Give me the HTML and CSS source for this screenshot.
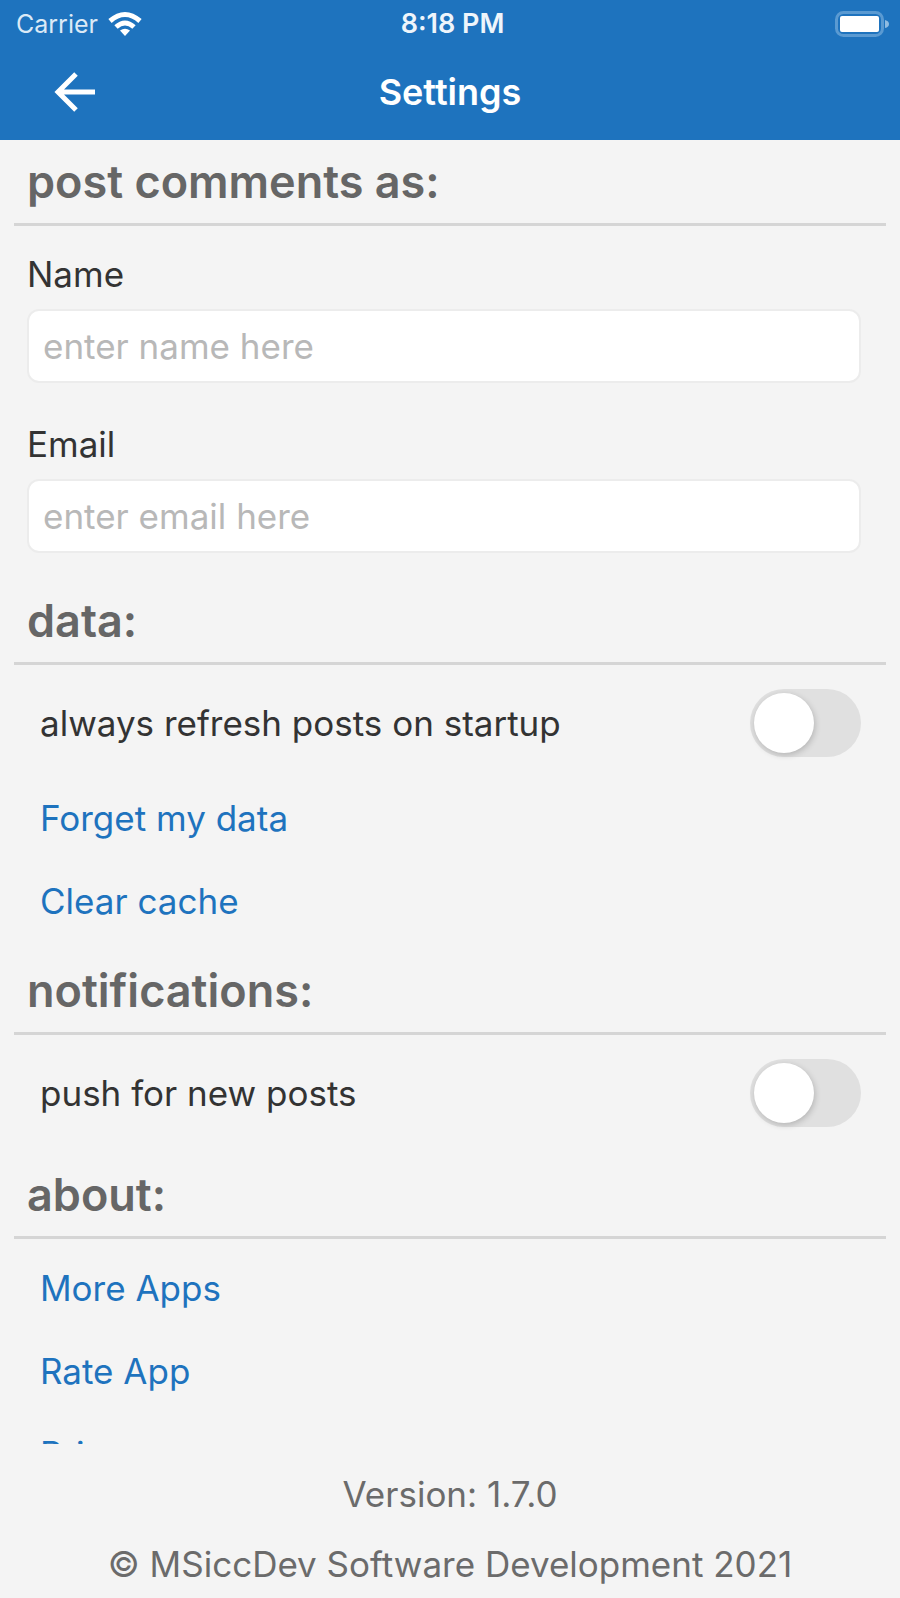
FILE: index.html
```
<!DOCTYPE html>
<html lang="en">
<head>
    <meta charset="UTF-8">
    <meta name="viewport" content="width=device-width, initial-scale=1">
    <title>Settings</title>
    <link rel="stylesheet" href="styles.css">
</head>
<body>
<header class="header">
    <div class="status-bar">
        <div class="carrier">
            <span>Carrier</span>
            <svg width="34" height="26" viewBox="0 0 34 26" aria-hidden="true">
                <g fill="none" stroke="#fff" stroke-width="5">
                    <path d="M2 10 Q17 -3 32 10"/>
                    <path d="M8 16 Q17 8 26 16"/>
                </g>
                <path d="M12 19.500 Q17 16 22 19.500 L17 25 Z" fill="#fff"/>
            </svg>
        </div>
        <span class="time">8:18 PM</span>
        <svg class="battery" width="54" height="26" viewBox="0 0 54 26" aria-hidden="true">
            <rect x="1.500" y="1.500" width="46" height="23" rx="7" fill="none" stroke="#5a9ad2" stroke-width="3"/>
            <rect x="5" y="5" width="39" height="16" rx="2" fill="#fff"/>
            <path d="M50 9 Q54 10 54 13 Q54 16 50 17 Z" fill="#8fbbe1"/>
        </svg>
    </div>
    <div class="nav-bar">
        <button class="back" type="button" aria-label="Back">
            <svg width="42" height="42" viewBox="0 0 42 42" aria-hidden="true">
                <path d="M22 3 L4 21 L22 39 M5 21 H41" fill="none" stroke="#fff" stroke-width="5"/>
            </svg>
        </button>
        <h1 class="title">Settings</h1>
    </div>
</header>
<main class="content">
    <h2 class="heading">post comments as:</h2>
    <form class="fields" autocomplete="off">
        <div class="field">
            <label for="name">Name</label>
            <input type="text" id="name" name="name" placeholder="enter name here">
        </div>
        <div class="field">
            <label for="email">Email</label>
            <input type="email" id="email" name="email" placeholder="enter email here">
        </div>
    </form>

    <h2 class="heading">data:</h2>
    <div class="rows">
        <div class="toggle-row">
            <label for="refresh">always refresh posts on startup</label>
            <input class="switch" type="checkbox" id="refresh" name="refresh">
        </div>
        <button class="action" type="button">Forget my data</button>
        <button class="action" type="button">Clear cache</button>
    </div>

    <h2 class="heading">notifications:</h2>
    <div class="rows">
        <div class="toggle-row">
            <label for="push">push for new posts</label>
            <input class="switch" type="checkbox" id="push" name="push">
        </div>
    </div>

    <h2 class="heading">about:</h2>
    <nav class="rows links">
        <a class="action" href="#apps">More Apps</a>
        <a class="action" href="#rate">Rate App</a>
        <a class="action" href="#privacy">Privacy</a>
    </nav>
</main>
<footer class="footer">
    <p>Version: 1.7.0</p>
    <p>© MSiccDev Software Development 2021</p>
</footer>
</body>
</html>
```
FILE: styles.css
```
* {
    box-sizing: border-box;
}
body {
    display: flex;
    flex-direction: column;
    height: 100vh;
    margin: 0;
    background: #f4f4f4;
    color: #333;
    font-family: Inter, "Liberation Sans", sans-serif;
    font-size: 35px;
    line-height: 44px;
}
h1, h2, p {
    margin: 0;
}

/* header */
.header {
    flex: none;
    background: #1e73be;
    color: #fff;
}
.status-bar {
    display: grid;
    grid-template-columns: 1fr auto 1fr;
    align-items: center;
    height: 48px;
    padding: 0 11px 0 16px;
    font-size: 25px;
    line-height: 32px;
}
.carrier {
    display: flex;
    align-items: center;
    gap: 10px;
    color: #dbe9f6;
}
.time {
    color: #eef5fb;
    font-size: 27px;
    font-weight: 600;
}
.battery {
    justify-self: end;
}
.nav-bar {
    display: grid;
    grid-template-columns: 1fr auto 1fr;
    align-items: center;
    height: 92px;
    padding: 0 24px 4px;
}
.back {
    display: flex;
    justify-self: start;
    padding: 0 30px;
    border: 0;
    background: none;
    cursor: pointer;
}
.title {
    font-size: 36px;
    font-weight: 600;
}

/* settings list */
.content {
    flex: 1;
    min-height: 0;
    overflow-y: auto;
    scrollbar-width: none;
}
.heading {
    margin: 0 14px;
    padding: 14px 13px 13px;
    border-bottom: 3px solid #d5d5d5;
    color: #666;
    font-size: 45px;
    font-weight: 600;
    line-height: 56px;
}
.fields {
    display: flex;
    flex-direction: column;
    gap: 39px;
    padding: 26px 39px 26px 27px;
}
.field {
    display: flex;
    flex-direction: column;
    gap: 13px;
}
.field input {
    width: 100%;
    height: 74px;
    padding: 0 14px;
    border: 2px solid #ececec;
    border-radius: 12px;
    background: #fff;
    color: #333;
    font: inherit;
}
.field input::placeholder {
    color: #b8b8b8;
    opacity: 1;
}
.rows {
    display: flex;
    flex-direction: column;
    padding: 4px 39px 6px 40px;
}
.links {
    padding-top: 8px;
}
.toggle-row {
    display: flex;
    align-items: center;
    justify-content: space-between;
    height: 108px;
}
.switch {
    appearance: none;
    flex: none;
    width: 111px;
    height: 68px;
    margin: 0;
    padding: 4px;
    border-radius: 34px;
    background: #e0e0e0;
    cursor: pointer;
}
.switch::before {
    content: "";
    display: block;
    width: 60px;
    height: 60px;
    border-radius: 50%;
    background: #fff;
    box-shadow: 1px 2px 6px rgba(0, 0, 0, .2);
}
.switch:checked {
    background: #1e73be;
}
.switch:checked::before {
    margin-left: auto;
}
.action {
    flex: none;
    align-self: flex-start;
    height: 83px;
    padding: 0;
    border: 0;
    background: none;
    color: #1e73be;
    font: inherit;
    line-height: 83px;
    text-decoration: none;
    cursor: pointer;
}

/* footer */
.footer {
    display: flex;
    flex: none;
    flex-direction: column;
    gap: 26px;
    padding: 28px 16px 12px;
    color: #6b6b6b;
    text-align: center;
}
```
